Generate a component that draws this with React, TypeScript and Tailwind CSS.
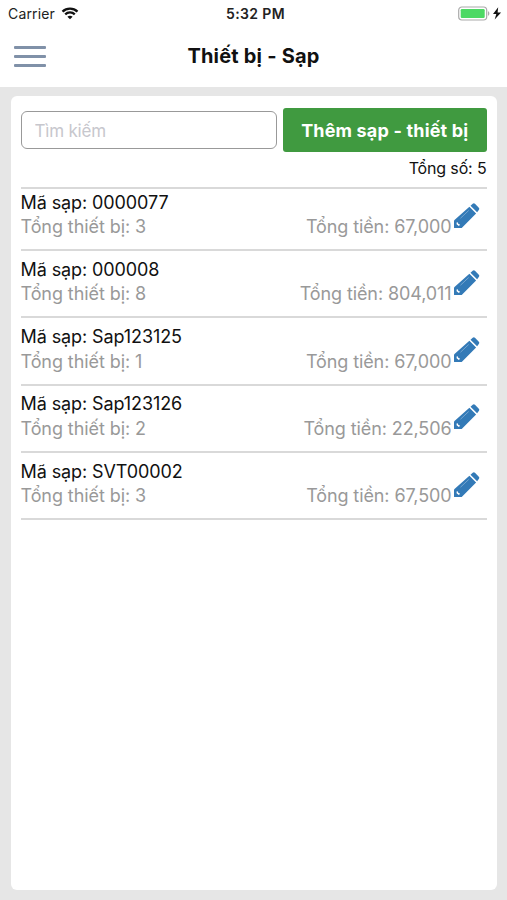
type Stall = { code: string; devices: number; total: string };

const stalls: Stall[] = [
  { code: '0000077', devices: 3, total: '67,000' },
  { code: '000008', devices: 8, total: '804,011' },
  { code: 'Sap123125', devices: 1, total: '67,000' },
  { code: 'Sap123126', devices: 2, total: '22,506' },
  { code: 'SVT00002', devices: 3, total: '67,500' },
];

function WifiIcon() {
  return (
    <svg width="18" height="13" viewBox="0 0 17 13" fill="none" stroke="#111" strokeWidth="2.3">
      <path d="M1 4.6C5.2.6 11.8.6 16 4.6" />
      <path d="M3.7 7.4c2.7-2.6 6.9-2.6 9.6 0" />
      <path d="M8.5 12.3 5.9 9.7c1.5-1.4 3.7-1.4 5.2 0z" fill="#111" stroke="none" />
    </svg>
  );
}

function BatteryIcon() {
  return (
    <svg width="44" height="16" viewBox="0 0 44 16">
      <rect x=".7" y="1" width="28" height="13" rx="3.2" fill="#fff" stroke="#aaa" strokeWidth="1.2" />
      <rect x="2.7" y="3" width="24" height="9" rx="1.2" fill="#4cd964" />
      <path d="M30 5.2c1.8.5 1.8 4.1 0 4.6z" fill="#aaa" />
      <path d="M40.200 1.200 35 8h3.300l-1.600 5.600L43.100 6.500h-3.500z" fill="#111" />
    </svg>
  );
}

function PencilIcon() {
  return (
    <svg width="26" height="26" viewBox="0 0 26 26">
      <path d="M15.400 3.800 22.100 10.500 8.200 24.500Q7.800 25 7 25H.6Q0 25 0 24.400V18.200Q0 17.500.5 17Z" fill="#337ab7" />
      <path d="M16.500 2.700 18.700.8Q19.900-.2 21.200 1L24.600 4.400Q25.900 5.700 24.800 6.900L23.100 9.300Z" fill="#337ab7" />
      <path d="M2.600 19.400 3.700 19.200 4.200 20.700 5.700 21.200 5.700 22.300 4.800 22.900 2.600 21.200Z" fill="#fff" />
      <path d="M6.500 15.200 14.700 7.500" stroke="#85b0d5" strokeWidth=".8" />
    </svg>
  );
}

function StallRow({ stall, first }: { stall: Stall; first: boolean }) {
  return (
    <li className={`flex flex-col justify-end border-b-2 border-[#d9d9d9] ${first ? 'h-[62.3px]' : 'h-[67.2px]'}`}>
      <div className="flex h-[58.5px] items-start">
        <div className="flex-1 text-[18px] leading-[24.5px]">
          <p className="text-[#111] tracking-[-0.1px]">Mã sạp: {stall.code}</p>
          <div className="flex justify-between text-[#999]">
            <span className="tracking-[-0.08px]">Tổng thiết bị: {stall.devices}</span>
            <span className="tracking-[-0.1px]">Tổng tiền: {stall.total}</span>
          </div>
        </div>
        <button className="ml-[2px] mr-[7px] mt-[12px]" aria-label="Sửa">
          <PencilIcon />
        </button>
      </div>
    </li>
  );
}

export default function App() {
  return (
    <div className="flex h-[900px] w-[507px] flex-col overflow-hidden bg-[#e6e6e6] font-[Inter,sans-serif]">
      <header className="h-[87px] bg-white">
        <div className="grid h-[27px] grid-cols-3 items-center pl-[8px] pr-[5px] text-[#222]">
          <div className="flex items-center gap-[6px] text-[14px] tracking-[0.15px]">
            <span>Carrier</span>
            <WifiIcon />
          </div>
          <span className="pl-[1px] text-center text-[14px] font-semibold tracking-[0.35px]">5:32 PM</span>
          <div className="flex justify-end">
            <BatteryIcon />
          </div>
        </div>
        <div className="grid h-[58px] grid-cols-[1fr_auto_1fr] items-center px-[14px]">
          <button className="flex w-[32px] flex-col gap-[6px]" aria-label="Menu">
            <span className="h-[3px] rounded-[1px] bg-[#8091a8]" />
            <span className="h-[3px] rounded-[1px] bg-[#8091a8]" />
            <span className="h-[3px] rounded-[1px] bg-[#8091a8]" />
          </button>
          <h1 className="text-[20px] font-bold tracking-[0.2px] text-[#111]">Thiết bị - Sạp</h1>
        </div>
      </header>
      <main className="mx-[10.5px] mb-[10px] mt-[9px] flex-1 rounded-[6px] bg-white px-[10px] pt-[12px]">
        <div className="flex items-center gap-[6px]">
          <input
            className="h-[38px] min-w-0 flex-1 rounded-[6px] border border-[#999] px-[13px] pt-[2px] text-[17px] tracking-[-0.2px] text-[#222] placeholder:text-[#c7c7cd]"
            placeholder="Tìm kiếm"
          />
          <button className="mr-[-0.5px] h-[44px] w-[204.5px] whitespace-nowrap rounded-[3px] bg-[#409a40] text-[18px] font-bold tracking-[0.17px] text-white">
            Thêm sạp - thiết bị
          </button>
        </div>
        <p className="h-[35px] pt-[4px] text-right text-[16px] leading-[25px] tracking-[-0.15px] text-[#111]">Tổng số: 5</p>
        <ul className="border-t-2 border-[#d9d9d9]">
          {stalls.map((stall, i) => (
            <StallRow key={stall.code} stall={stall} first={i === 0} />
          ))}
        </ul>
      </main>
    </div>
  );
}
